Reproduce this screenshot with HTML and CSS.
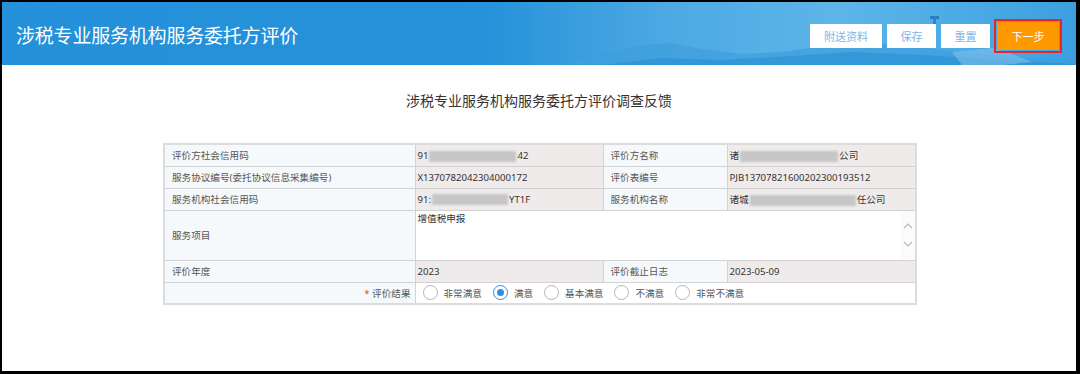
FILE: index.html
```html
<!DOCTYPE html>
<html lang="zh-CN">

<head>
    <meta charset="UTF-8">
    <meta name="viewport" content="width=device-width, initial-scale=1.0">
    <title>涉税专业服务机构服务委托方评价</title>
    <link rel="stylesheet" href="styles.css">
</head>

<body>
    <div class="frame">
        <header class="topBar">
            <svg class="hills" width="1074" height="63" viewBox="0 0 1074 63" preserveAspectRatio="none">
                <defs>
                    <linearGradient id="sky" x1="0" y1="0" x2="1" y2="0">
                        <stop offset="0" stop-color="#2390d9" />
                        <stop offset="0.45" stop-color="#2592d9" />
                        <stop offset="0.62" stop-color="#4ea9e3" />
                        <stop offset="0.78" stop-color="#5db5e8" />
                        <stop offset="0.92" stop-color="#48a8e3" />
                        <stop offset="1" stop-color="#3c9fe0" />
                    </linearGradient>
                </defs>
                <rect width="1074" height="63" fill="url(#sky)" />
                <path d="M560 63 L600 52 L640 43 L668 41 L700 47 L740 52 L780 50 L820 44 L860 40 L900 43 L940 48 L980 52 L1020 56 L1074 58 L1074 63 Z" fill="#3f9fdd" opacity="0.75" />
                <path d="M600 63 L660 56 L720 58 L790 54 L850 50 L920 53 L1000 58 L1074 62 L1074 63 Z" fill="#2f93d6" opacity="0.8" />
                <path d="M950 50 L990 46 L1010 52 L1030 60 L1000 63 L960 63 Z" fill="#8cc8ee" opacity="0.5" />
                <rect x="928" y="14" width="9" height="3" fill="#2a7fc0" />
                <rect x="931" y="17" width="3" height="10" fill="#2a86c8" />
            </svg>
            <h1 class="appTitle">涉税专业服务机构服务委托方评价</h1>
            <div class="actions">
                <button class="btnLight btnWide">附送资料</button>
                <button class="btnLight">保存</button>
                <button class="btnLight">重置</button>
                <span class="nextWrap"><button class="btnNext">下一步</button></span>
            </div>
        </header>

        <main class="content">
            <h2 class="formTitle">涉税专业服务机构服务委托方评价调查反馈</h2>

            <table class="evalTable">
                <colgroup>
                    <col class="colLabel">
                    <col class="colValue">
                    <col class="colLabel2">
                    <col class="colValue2">
                </colgroup>
                <tr>
                    <td class="label">评价方社会信用码</td>
                    <td class="value">91<span class="mask" style="width:87px"></span>42</td>
                    <td class="label">评价方名称</td>
                    <td class="value">诸<span class="mask" style="width:98px"></span>公司</td>
                </tr>
                <tr>
                    <td class="label">服务协议编号(委托协议信息采集编号)</td>
                    <td class="value">X1370782042304000172</td>
                    <td class="label">评价表编号</td>
                    <td class="value">PJB13707821600202300193512</td>
                </tr>
                <tr>
                    <td class="label">服务机构社会信用码</td>
                    <td class="value">91:<span class="mask" style="width:76px"></span>YT1F</td>
                    <td class="label">服务机构名称</td>
                    <td class="value">诸城<span class="mask" style="width:106px"></span>任公司</td>
                </tr>
                <tr class="tallRow">
                    <td class="label">服务项目</td>
                    <td class="memo" colspan="3">
                        <div class="memoBox">
                            <span class="memoText">增值税申报</span>
                            <span class="scroller">
                                <svg width="10" height="6" viewBox="0 0 10 6"><path d="M1 5 L5 1 L9 5" fill="none" stroke="#b9b9b9" stroke-width="1.2" /></svg>
                                <svg width="10" height="6" viewBox="0 0 10 6"><path d="M1 1 L5 5 L9 1" fill="none" stroke="#b9b9b9" stroke-width="1.2" /></svg>
                            </span>
                        </div>
                    </td>
                </tr>
                <tr>
                    <td class="label">评价年度</td>
                    <td class="value">2023</td>
                    <td class="label">评价截止日志</td>
                    <td class="value">2023-05-09</td>
                </tr>
                <tr class="lastRow">
                    <td class="label labelRight"><span class="star">*</span> 评价结果</td>
                    <td class="choices" colspan="3">
                        <div class="choiceRow">
                            <label class="choice"><span class="radio"></span>非常满意</label>
                            <label class="choice"><span class="radio on"></span>满意</label>
                            <label class="choice"><span class="radio"></span>基本满意</label>
                            <label class="choice"><span class="radio"></span>不满意</label>
                            <label class="choice"><span class="radio"></span>非常不满意</label>
                        </div>
                    </td>
                </tr>
            </table>
        </main>
    </div>
</body>

</html>
```

FILE: styles.css
```css
* {
    margin: 0;
    padding: 0;
    box-sizing: border-box;
}

body {
    background-color: #000;
    font-family: "Noto Sans", "Noto Sans CJK SC", sans-serif;
}

.frame {
    width: 1080px;
    height: 374px;
    border-style: solid;
    border-color: #000;
    border-width: 2px 4px 3px 2px;
    background-color: #fff;
}

.topBar {
    position: relative;
    height: 63px;
    display: flex;
    align-items: center;
    justify-content: space-between;
    padding-left: 14px;
    padding-right: 14px;
    overflow: hidden;
}

.hills {
    position: absolute;
    left: 0;
    top: 0;
}

.appTitle {
    position: relative;
    font-size: 19px;
    font-weight: normal;
    color: #fff;
    letter-spacing: -0.2px;
    margin-top: 3px;
}

.actions {
    position: relative;
    display: flex;
    align-items: center;
    gap: 5px;
    margin-top: 4px;
}

.btnLight {
    height: 24px;
    width: 49px;
    border: none;
    background-color: #fff;
    color: #7db6e4;
    font-family: inherit;
    font-size: 11px;
}

.btnWide {
    width: 72px;
}

.nextWrap {
    display: flex;
    border: 2px solid #e8262a;
    padding: 1px;
    margin-left: -1px;
}

.btnNext {
    width: 62px;
    height: 28px;
    border: none;
    background-color: #ff9900;
    color: #fff;
    font-family: inherit;
    font-size: 11px;
}

.content {
    display: flex;
    flex-direction: column;
    align-items: center;
}

.formTitle {
    font-size: 14px;
    font-weight: normal;
    color: #333;
    line-height: 20px;
    margin-top: 26px;
    margin-bottom: 32px;
}

.evalTable {
    width: 752px;
    table-layout: fixed;
    border-collapse: collapse;
    border: 2px solid #dcdcdc;
    font-size: 9.6px;
    margin-left: 2px;
}

.colLabel {
    width: 251px;
}

.colValue {
    width: 188px;
}

.colLabel2 {
    width: 124px;
}

.colValue2 {
    width: 189px;
}

.evalTable td {
    border: 1px solid #d2d2d2;
    height: 22px;
    white-space: nowrap;
    overflow: hidden;
}

.label {
    background-color: #f5f9fc;
    color: #555;
    padding-left: 7px;
}

.labelRight {
    text-align: right;
    padding-right: 4px;
}

.star {
    color: #e53935;
}

.value {
    background-color: #f0ebeb;
    color: #333;
    padding-left: 2px;
}

.mask {
    display: inline-block;
    height: 11px;
    vertical-align: middle;
    background-color: #c6c6c6;
    filter: blur(1px);
    margin: 0 1px;
}

.tallRow td {
    height: 50px;
}

.memo {
    background-color: #fff;
    vertical-align: top;
}

.memoBox {
    display: flex;
    justify-content: space-between;
    height: 48px;
}

.memoText {
    color: #333;
    padding-left: 2px;
    line-height: 16px;
}

.scroller {
    width: 14px;
    display: flex;
    flex-direction: column;
    justify-content: center;
    align-items: center;
    gap: 12px;
    background-color: #fbfbfb;
}

.choices {
    background-color: #fff;
    color: #555;
    padding-left: 7px;
}

.choiceRow {
    display: flex;
    align-items: center;
    gap: 11px;
}

.choice {
    display: flex;
    align-items: center;
}

.radio {
    width: 15px;
    height: 15px;
    border: 1px solid #b5b5b5;
    border-radius: 50%;
    margin-right: 6px;
    display: flex;
    align-items: center;
    justify-content: center;
}

.radio.on {
    border-color: #2f8ee0;
}

.radio.on::after {
    content: "";
    width: 7px;
    height: 7px;
    border-radius: 50%;
    background-color: #2f8ee0;
}
```
